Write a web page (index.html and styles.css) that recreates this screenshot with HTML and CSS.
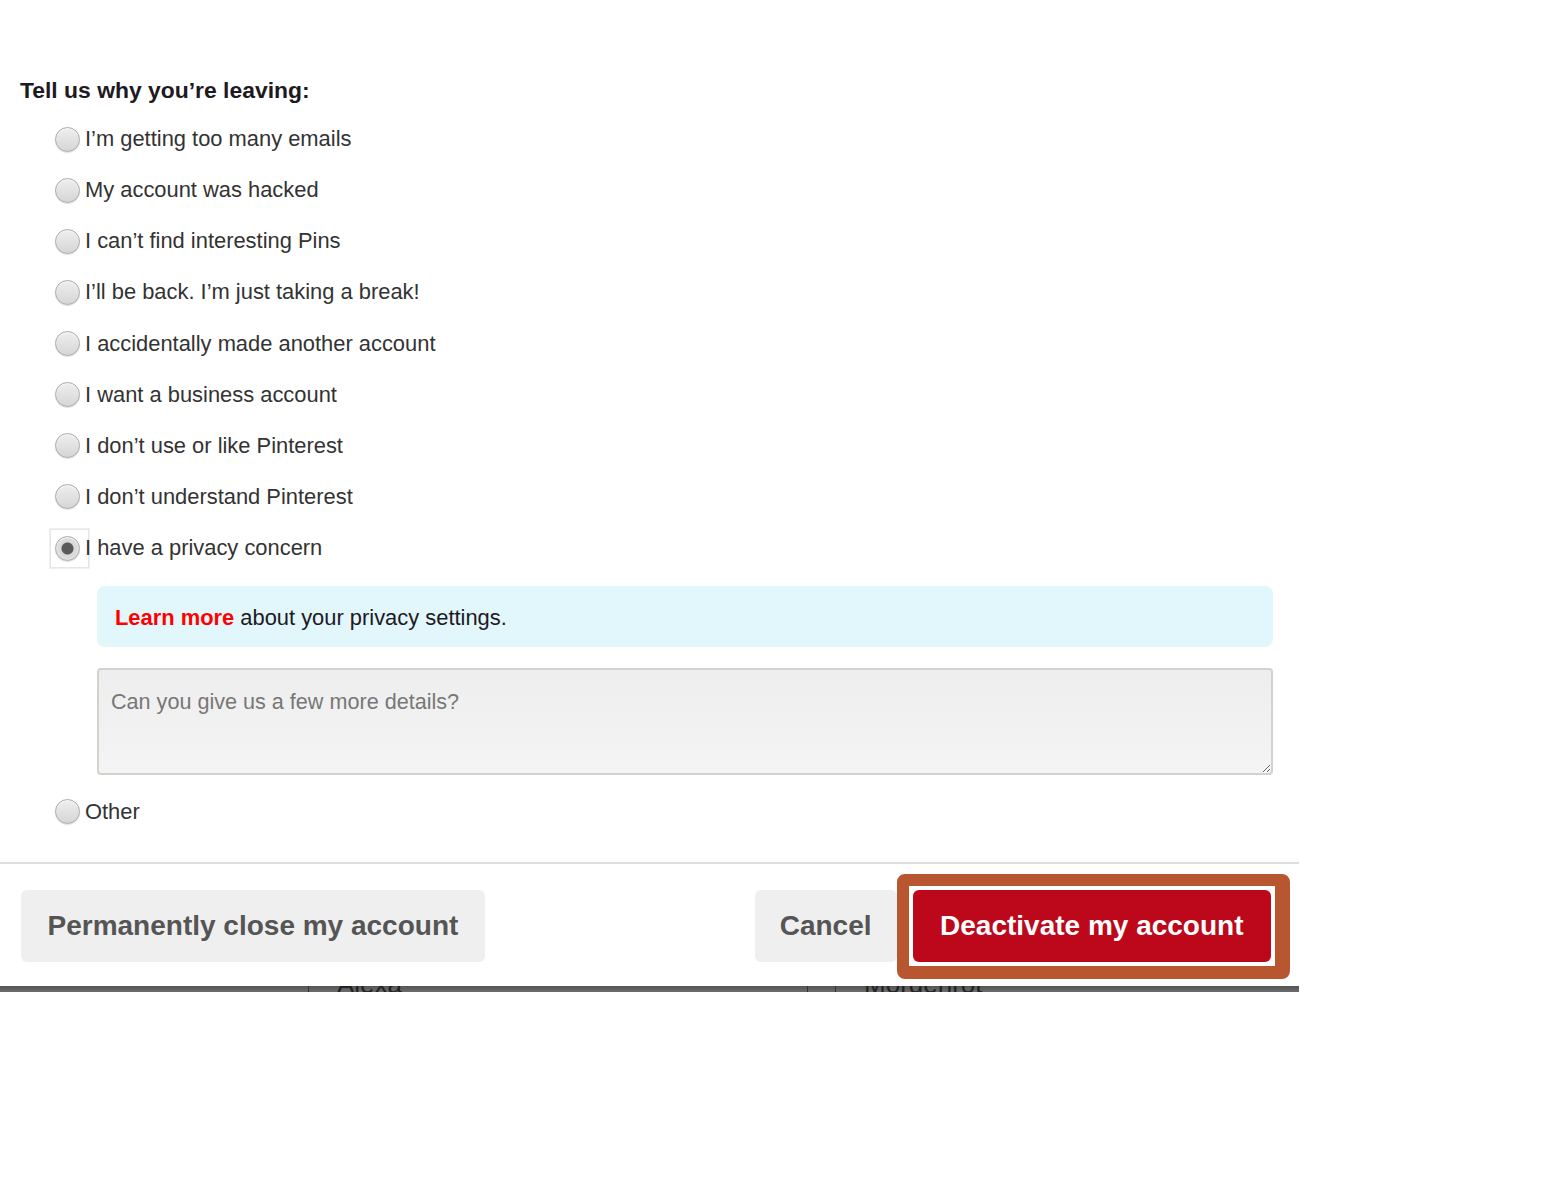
FILE: index.html
```html
<!DOCTYPE html>
<html lang="en">
<head>
<meta charset="utf-8">
<title>Deactivate account</title>
<link rel="stylesheet" href="styles.css">
</head>
<body>
<div class="modal">
  <div class="content">
    <h2 class="title">Tell us why you’re leaving:</h2>
    <div class="options">
      <label class="option"><input type="radio" name="reason" class="radio"><span class="label">I’m getting too many emails</span></label>
      <label class="option"><input type="radio" name="reason" class="radio"><span class="label">My account was hacked</span></label>
      <label class="option"><input type="radio" name="reason" class="radio"><span class="label">I can’t find interesting Pins</span></label>
      <label class="option"><input type="radio" name="reason" class="radio"><span class="label">I’ll be back. I’m just taking a break!</span></label>
      <label class="option"><input type="radio" name="reason" class="radio"><span class="label">I accidentally made another account</span></label>
      <label class="option"><input type="radio" name="reason" class="radio"><span class="label">I want a business account</span></label>
      <label class="option"><input type="radio" name="reason" class="radio"><span class="label">I don’t use or like Pinterest</span></label>
      <label class="option"><input type="radio" name="reason" class="radio"><span class="label">I don’t understand Pinterest</span></label>
      <label class="option"><span class="focus-ring"><input type="radio" name="reason" class="radio" checked></span><span class="label">I have a privacy concern</span></label>
      <div class="details">
        <div class="info"><a class="learn" href="#">Learn more</a> about your privacy settings.</div>
        <textarea class="more" placeholder="Can you give us a few more details?"></textarea>
      </div>
      <label class="option"><input type="radio" name="reason" class="radio"><span class="label">Other</span></label>
    </div>
  </div>
  <div class="footer">
    <button class="btn btn-gray">Permanently close my account</button>
    <div class="right">
      <button class="btn btn-gray btn-cancel">Cancel</button>
      <div class="highlight"><button class="btn btn-red">Deactivate my account</button></div>
    </div>
  </div>
</div>
<div class="backdrop">
  <span class="sep sep1"></span><span class="bg-text t1">Alexa</span>
  <span class="sep sep2"></span><span class="sep sep3"></span><span class="bg-text t2">Morgenrot</span>
</div>
</body>
</html>
```

FILE: styles.css
```css
html, body {
  margin: 0;
  padding: 0;
  background: #fff;
}
body {
  font-family: "Liberation Sans", Arial, Helvetica, sans-serif;
  color: #333;
}
.modal {
  width: 1299px;
  background: #fff;
}
.content {
  padding-top: 77px;
}
.title {
  margin: 0 0 0 20px;
  font-size: 22.9px;
  line-height: 26px;
  font-weight: bold;
  color: #211922;
}
.options {
  display: flex;
  flex-direction: column;
  padding: 10.5px 26px 24px 55px;
}
.option {
  display: flex;
  align-items: center;
  height: 51.125px;
  font-size: 21.9px;
  color: #333;
  gap: 5px;
}
.label {
  position: relative;
}
.radio {
  -webkit-appearance: none;
  appearance: none;
  margin: 0;
  width: 25px;
  height: 25px;
  border-radius: 50%;
  border: 1px solid #a9a9a9;
  background: linear-gradient(#eeeeee, #d6d6d6);
  box-shadow: inset 0 1px 1px #fafafa, 0 1px 1px rgba(0,0,0,0.12);
  box-sizing: border-box;
  flex: none;
  position: relative;
}
.radio:checked {
  background: radial-gradient(circle, #5a5a5a 0 5.5px, #d8d8d8 6.5px, #e8e8e8 100%);
}
.focus-ring {
  position: relative;
  display: flex;
}
.focus-ring::before {
  content: "";
  position: absolute;
  left: -5px;
  top: -7px;
  width: 37px;
  height: 37px;
  border: 1px solid #e6e6e6;
  box-shadow: 0 0 0 1px #f0f0f0;
}
.details {
  display: flex;
  flex-direction: column;
  margin: 12.4px 0 11.4px 42px;
}
.info {
  background: #e1f7fc;
  border-radius: 8px;
  height: 61px;
  box-sizing: border-box;
  padding: 19px 18px 16px;
  font-size: 21.9px;
  line-height: 26px;
  color: #211922;
}
.learn {
  color: #ff0000;
  font-weight: bold;
  text-decoration: none;
}
.more {
  margin-top: 21px;
  height: 107px;
  box-sizing: border-box;
  border: 2px solid #d5d1cd;
  border-radius: 4px;
  background: linear-gradient(#eeeeee, #f4f4f4);
  padding: 19px 12px;
  font-family: "Liberation Sans", Arial, sans-serif;
  font-size: 21.6px;
  line-height: 26px;
  color: #333;
  resize: vertical;
  outline: none;
}
.more::placeholder {
  color: #777;
}
.footer {
  border-top: 2px solid #dddddd;
  display: flex;
  align-items: center;
  justify-content: space-between;
  padding: 10px 9px 7px 21px;
}
.right {
  display: flex;
  align-items: center;
}
.btn {
  font-family: "Liberation Sans", Arial, sans-serif;
  font-weight: bold;
  font-size: 28px;
  height: 72px;
  padding: 0 26.5px;
  border: none;
  border-radius: 6px;
  cursor: pointer;
}
.btn-gray {
  background: #efefef;
  color: #555;
}
.btn-cancel {
  padding: 0 25px;
}
.highlight {
  display: flex;
  background: #fff;
  padding: 4px;
  border-style: solid;
  border-color: #b85630;
  border-width: 12px 15px 13px 12px;
  border-radius: 8px;
}
.btn-red {
  background: #bd081c;
  color: #fff;
  padding: 0 27.5px;
}
.backdrop {
  width: 1299px;
  height: 6px;
  overflow: hidden;
  display: flex;
  background: linear-gradient(#555555, #6c6c6c);
}
.sep {
  flex: none;
  width: 1px;
  height: 6px;
  background: #333;
}
.sep1 { margin-left: 308px; }
.sep2 { margin-left: 405px; }
.sep3 { margin-left: 27px; }
.bg-text {
  flex: none;
  font-size: 26px;
  line-height: 26px;
  margin-top: -15px;
  color: #222;
}
.t1 { margin-left: 28px; }
.t2 { margin-left: 28px; }
```
